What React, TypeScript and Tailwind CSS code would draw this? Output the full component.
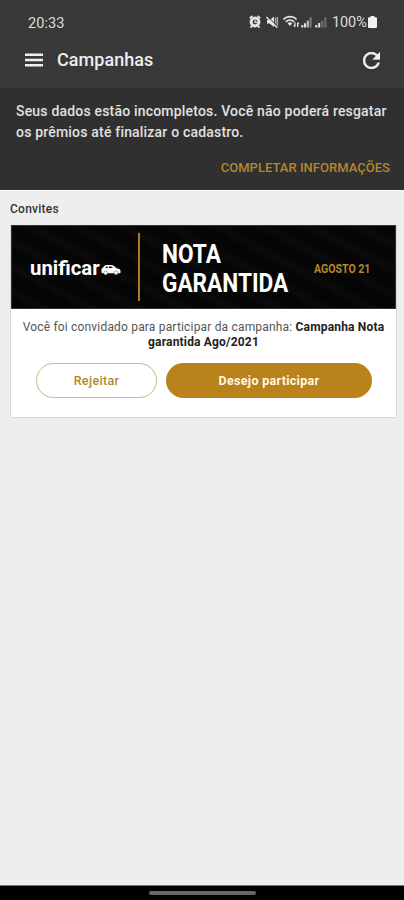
const StatusIcons = () => (
  <svg width="79" height="14" viewBox="0 0 79 14" fill="none" stroke="#e4e4e4">
    {/* alarm */}
    <circle cx="6" cy="7" r="3.9" strokeWidth="3" />
    <path d="M0.8 3.2 3.4 1M11.2 3.2 8.6 1M2.8 11l-1.3 1.6M9.2 11l1.3 1.6" strokeWidth="1.8" />
    <path d="M6 4.8V7.4H8" strokeWidth="1.1" />
    {/* muted */}
    <path d="M18 5h2.6L25 1.6V12l-4.4-3.4H18z" fill="#e4e4e4" stroke="none" />
    <path d="M26.5 2.6v8M28.4 2v10" stroke="#aaa" strokeWidth="1.4" />
    <path d="M18.6 1.3 29 11.7" stroke="#383838" strokeWidth="1" />
    <path d="M17.4 2 28.2 12.8" strokeWidth="1.3" />
    {/* wifi */}
    <path d="M34.4 4.4C38 .8 44 .8 47.6 4.4" strokeWidth="1.7" />
    <path d="M36.8 6.8c2.4-2.3 6-2.3 8.4 0" strokeWidth="1.6" />
    <path d="M38.6 8.2c1.5-1.2 3.3-1.2 4.8 0L41 11z" fill="#e4e4e4" stroke="none" />
    <path d="M46 7.2v4.4M44.7 10.2l1.3 1.6M48.6 12V7.6M50 9.2l-1.4-1.6" strokeWidth="1.2" />
    {/* signal */}
    <path d="M53.3 10v2.5M56 8.3v4.2" strokeWidth="2" />
    <path d="M58.8 5.7v6.8" stroke="#bbb" strokeWidth="2.2" />
    <path d="M61.6 2.2v10.3" stroke="#777" strokeWidth="2.2" />
    <path d="M67.3 10v2.5M70.2 8v4.5" strokeWidth="2" />
    <path d="M73.2 5.5v7M76.3 2.2v10.3" stroke="#6c6c6c" strokeWidth="2.2" />
  </svg>
);

const MenuIcon = () => (
  <svg width="18" height="14" viewBox="0 0 18 14" fill="#eee">
    <path d="M0 .5h18v2.4H0zM0 5.8h18v2.4H0zM0 11.1h18v2.4H0z" />
  </svg>
);

const RefreshIcon = () => (
  <svg width="17" height="17" viewBox="4 4 16 16" fill="#f2f2f2" stroke="#f2f2f2" strokeWidth=".3">
    <path d="M17.65 6.35A7.96 7.96 0 0 0 12 4a8 8 0 1 0 7.73 10h-2.08A6 6 0 1 1 12 6c1.66 0 3.14.69 4.22 1.78L13 11h7V4z" />
  </svg>
);

const CarIcon = () => (
  <svg width="20" height="12" viewBox="0 0 20 12" fill="#fff">
    <path
      fillRule="evenodd"
      d="M.5 5 3.6 1.7Q4.3 1 5.3 1h5.2q1 0 1.8.6l3.2 2.7 2.8.8q1.2.4 1.2 1.8v1.6q0 .8-.8.8H1.4q-.9 0-.9-1zM4.2 4h2.5V2.4H5.6zM7.9 4h4.2l-1.8-1.6H7.9z"
    />
    <circle cx="4.7" cy="8.9" r="1.9" stroke="#050505" strokeWidth=".3" />
    <circle cx="15" cy="8.9" r="1.9" stroke="#050505" strokeWidth=".3" />
  </svg>
);

function Header() {
  return (
    <header className="h-[88px] bg-[#383838] text-[#eee]">
      <div className="flex h-[34px] items-end justify-between pl-[28px] pr-[27px]">
        <span className="mb-[1px] text-[14.5px] leading-[18px] tracking-[0.1px] text-[#ddd]">20:33</span>
        <div className="mb-[3px] flex items-center">
          <StatusIcons />
          <span className="ml-[4px] mt-[2px] w-[36px] whitespace-nowrap text-[14.5px] leading-[16px] tracking-[-0.1px] text-[#ddd]">100%</span>
          <svg width="9" height="12" viewBox="0 0 9 12" fill="#f2f2f2">
            <path d="M2.6 0h3.8v1.2H8q1 0 1 1V11q0 1-1 1H1q-1 0-1-1V2.2q0-1 1-1h1.6z" />
          </svg>
        </div>
      </div>
      <div className="flex h-[52px] items-center pl-[25px] pr-[24px]">
        <MenuIcon />
        <h1 className="ml-[14px] flex-1 text-[18px] font-medium leading-6 tracking-[0.05px]">Campanhas</h1>
        <RefreshIcon />
      </div>
    </header>
  );
}

function Warning() {
  return (
    <section className="flex h-[102px] flex-col bg-[#303030] pl-[16px] pr-[14px] pt-[13px]">
      <p className="whitespace-nowrap text-[14px] font-medium leading-[21px] tracking-[0.19px] text-[#e0e0e0]">
        Seus dados estão incompletos. Você não poderá resgatar
        <br />
        os prêmios até finalizar o cadastro.
      </p>
      <button className="mt-[17px] self-end whitespace-nowrap text-[13px] font-medium leading-[16px] tracking-[0.02px] text-[#b5872b]">
        COMPLETAR INFORMAÇÕES
      </button>
    </section>
  );
}

function Banner() {
  return (
    <div className="flex h-[84px] items-center border border-[#333] bg-[#050505] bg-[repeating-linear-gradient(28deg,#050505_0px,#050505_8px,#0b0b0b_14px,#050505_22px)]">
      <div className="flex w-[126px] items-center pl-[18px]">
        <span className="mt-[2px] w-[71px] origin-left scale-x-[1.02] whitespace-nowrap text-[20px] font-bold leading-6 text-white">unificar</span>
        <span className="mt-[5px]"><CarIcon /></span>
      </div>
      <div className="h-[68px] w-[2px] bg-[#a97b24]" />
      <div className="ml-[22px] mt-[4px] w-[126px] origin-left scale-x-[0.87] whitespace-nowrap text-[26px] font-bold leading-[29px] text-white">
        NOTA
        <br />
        GARANTIDA
      </div>
      <span className="ml-[26px] mt-[4px] origin-left scale-x-[0.88] whitespace-nowrap text-[12px] font-bold leading-4 text-[#b5872b]">AGOSTO 21</span>
    </div>
  );
}

function InviteCard() {
  return (
    <article className="h-[193px] w-[387px] rounded-b-[2px] border border-t-0 border-[#d8d8d8] bg-white">
      <Banner />
      <p className="mt-[11px] whitespace-nowrap text-center text-[12px] leading-[14.5px] tracking-[0.18px] text-[#555]">
        Você foi convidado para participar da campanha: <b className="font-bold text-[#222]">Campanha Nota</b>
        <br />
        <b className="font-bold text-[#222]">garantida Ago/2021</b>
      </p>
      <div className="mt-[14px] flex gap-[9px] pl-[25px]">
        <button className="h-[35px] w-[121px] rounded-full border border-[#cdb77c] pt-px text-[12.5px] font-medium tracking-[0.35px] text-[#b5872b]">Rejeitar</button>
        <button className="h-[35px] w-[206px] rounded-full bg-[#b9821b] pt-px text-[12.5px] font-bold tracking-[0.3px] text-[#fff8e8]">Desejo participar</button>
      </div>
    </article>
  );
}

export default function App() {
  return (
    <div className="flex h-[900px] w-[404px] flex-col overflow-hidden bg-[#eee] font-['Roboto','Liberation_Sans',sans-serif]">
      <Header />
      <Warning />
      <main className="flex-1 border-t border-[#fafafa] pl-[10px] pt-[10px]">
        <h2 className="mb-[8px] text-[12px] font-medium leading-4 tracking-[0.25px] text-[#333]">Convites</h2>
        <InviteCard />
      </main>
      <footer className="flex h-[15px] items-center justify-center border-t border-[#777] bg-black">
        <div className="h-[4px] w-[107px] rounded-full bg-[#666]" />
      </footer>
    </div>
  );
}
